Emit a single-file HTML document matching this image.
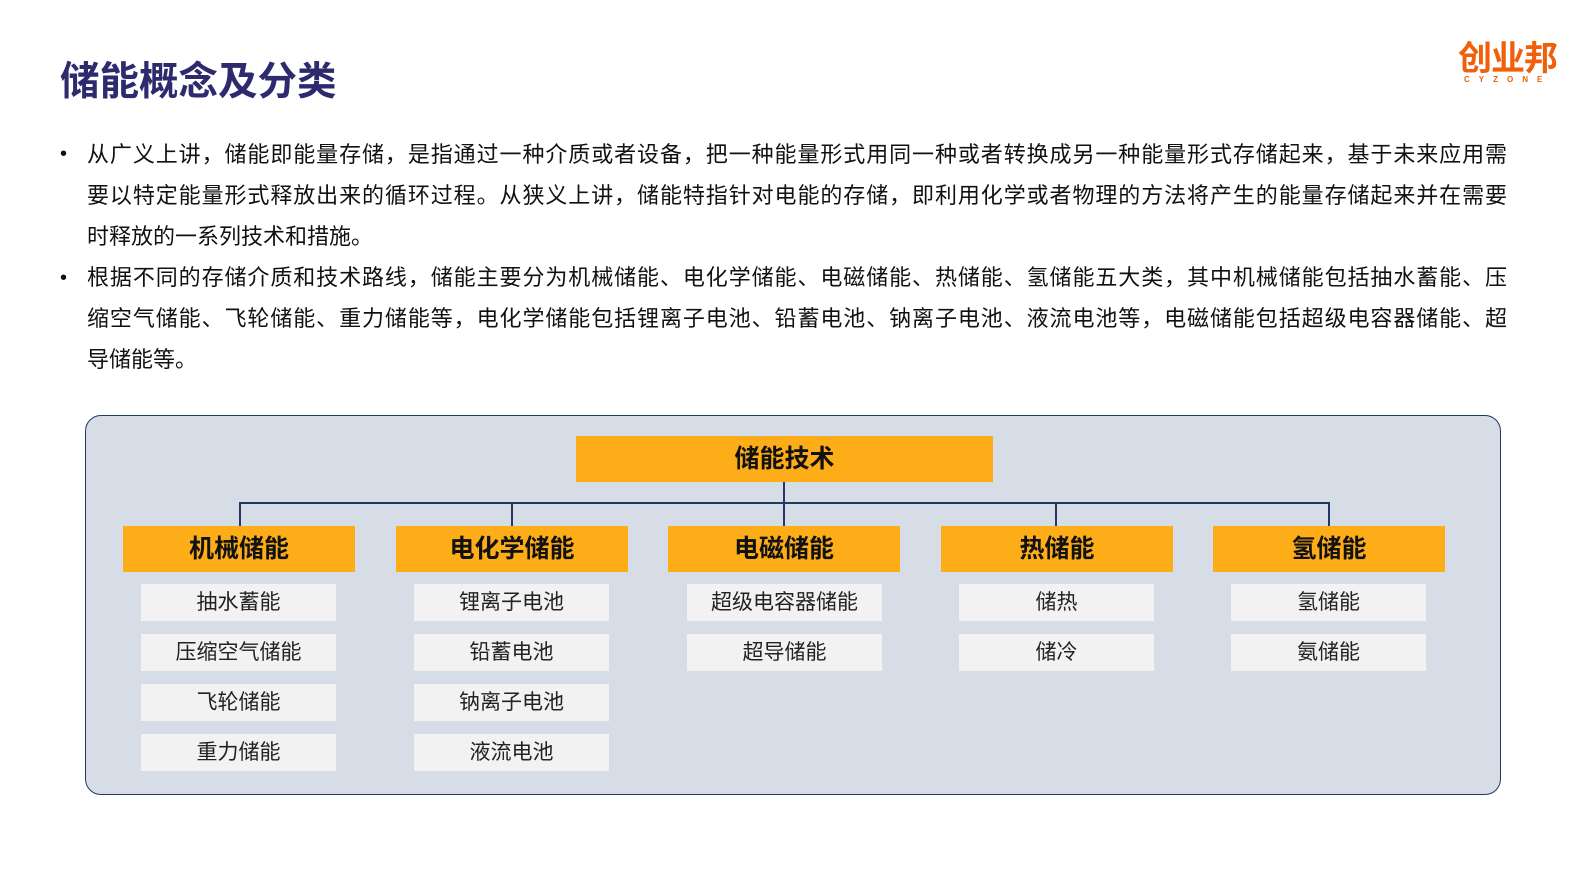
<!DOCTYPE html>
<html><head><meta charset="utf-8"><style>
*{margin:0;padding:0;box-sizing:border-box}
body{width:1587px;height:892px;background:#fff;position:relative;overflow:hidden;font-family:"Liberation Sans","Noto Sans CJK SC",sans-serif;color:#111}
.title{position:absolute;left:60px;top:50px;font-size:39.5px;font-weight:bold;color:#2e2a6e}
.logo{position:absolute;left:1458px;top:40px;color:#f0600a;font-weight:bold;font-size:34px;line-height:38px;letter-spacing:-1px}
.logo small{position:absolute;left:6px;top:36px;font-size:8px;letter-spacing:9px;line-height:8px;font-weight:bold}
.txt{position:absolute;left:87px;width:1420px;font-size:22px;line-height:41px}
.ln{display:block;text-align:justify;text-align-last:justify;height:41px;white-space:nowrap}
.ln.l{text-align-last:left}
.dot{position:absolute;left:60px;font-size:20px}
.panel{position:absolute;left:85px;top:415px;width:1416px;height:380px;background:#d6dde6;border:1.5px solid #1f3864;border-radius:16px}
.abs{position:absolute}
.top{left:576px;top:436px;width:417px;height:46px;background:#fdad18;font-size:25px;font-weight:bold;text-align:center;line-height:46px}
.h{top:526px;width:232px;height:46px;background:#fdad18;font-size:25px;font-weight:bold;text-align:center;line-height:46px}
.it{width:195px;height:37px;background:#f2f2f2;font-size:21px;text-align:center;line-height:37px;color:#222}
.vl{width:1.5px;background:#1f3864}
</style></head><body>
<div class="title">储能概念及分类</div>
<div class="logo">创业邦<small>CYZONE</small></div>
<div class="dot" style="top:143px">•</div>
<div class="dot" style="top:267px">•</div>
<div class="txt" style="top:134px">
<span class="ln">从广义上讲，储能即能量存储，是指通过一种介质或者设备，把一种能量形式用同一种或者转换成另一种能量形式存储起来，基于未来应用需</span>
<span class="ln">要以特定能量形式释放出来的循环过程。从狭义上讲，储能特指针对电能的存储，即利用化学或者物理的方法将产生的能量存储起来并在需要</span>
<span class="ln l">时释放的一系列技术和措施。</span>
<span class="ln">根据不同的存储介质和技术路线，储能主要分为机械储能、电化学储能、电磁储能、热储能、氢储能五大类，其中机械储能包括抽水蓄能、压</span>
<span class="ln">缩空气储能、飞轮储能、重力储能等，电化学储能包括锂离子电池、铅蓄电池、钠离子电池、液流电池等，电磁储能包括超级电容器储能、超</span>
<span class="ln l">导储能等。</span>
</div>
<div class="panel"></div>
<div class="abs top">储能技术</div>
<div class="abs vl" style="left:783px;top:482px;height:44px"></div>
<div class="abs" style="left:239px;top:502px;width:1090px;height:1.5px;background:#1f3864"></div>
<div class="abs vl" style="left:239px;top:502px;height:24px"></div>
<div class="abs vl" style="left:511px;top:502px;height:24px"></div>
<div class="abs vl" style="left:1055px;top:502px;height:24px"></div>
<div class="abs vl" style="left:1328px;top:502px;height:24px"></div>
<div class="abs h" style="left:123px">机械储能</div>
<div class="abs h" style="left:396px">电化学储能</div>
<div class="abs h" style="left:668px">电磁储能</div>
<div class="abs h" style="left:941px">热储能</div>
<div class="abs h" style="left:1213px">氢储能</div>
<div class="abs it" style="left:141px;top:584px">抽水蓄能</div>
<div class="abs it" style="left:141px;top:634px">压缩空气储能</div>
<div class="abs it" style="left:141px;top:684px">飞轮储能</div>
<div class="abs it" style="left:141px;top:734px">重力储能</div>
<div class="abs it" style="left:414px;top:584px">锂离子电池</div>
<div class="abs it" style="left:414px;top:634px">铅蓄电池</div>
<div class="abs it" style="left:414px;top:684px">钠离子电池</div>
<div class="abs it" style="left:414px;top:734px">液流电池</div>
<div class="abs it" style="left:687px;top:584px">超级电容器储能</div>
<div class="abs it" style="left:687px;top:634px">超导储能</div>
<div class="abs it" style="left:959px;top:584px">储热</div>
<div class="abs it" style="left:959px;top:634px">储冷</div>
<div class="abs it" style="left:1231px;top:584px">氢储能</div>
<div class="abs it" style="left:1231px;top:634px">氨储能</div>
</body></html>
